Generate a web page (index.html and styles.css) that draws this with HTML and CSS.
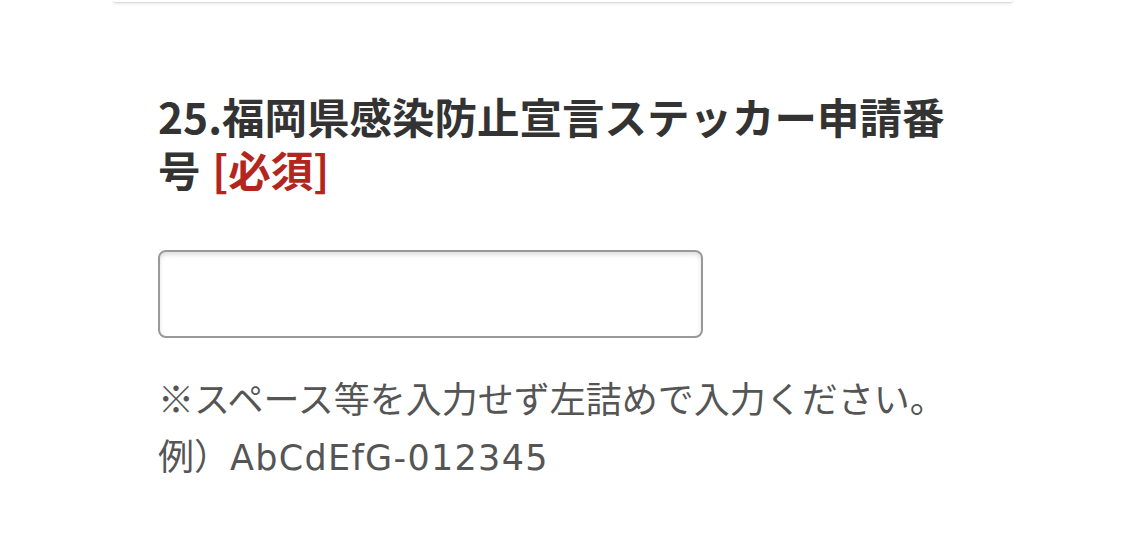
FILE: index.html
```html
<!DOCTYPE html>
<html lang="ja">
<head>
<meta charset="UTF-8" />
<meta name="viewport" content="width=device-width, initial-scale=1.0"/>
<title>申請フォーム</title>
<link rel="stylesheet" href="styles.css">
</head>
<body>
  <div class="prev-card"></div>

  <section class="field">
    <h3 class="field-title">25.福岡県感染防止宣言ステッカー申請番号 <span class="req">[必須]</span></h3>
    <input class="field-input" id="stickerNo" type="text" />
    <p class="note">※スペース等を入力せず左詰めで入力ください。</p>
    <p class="note">例）<span class="sample">AbCdEfG-012345</span></p>
  </section>
</body>
</html>
```

FILE: styles.css
```css
:root {
  --text: #333;
  --muted: #555;
  --required: #b3261e;
  --border: #999;
  --font: "Noto Sans CJK JP", "Noto Sans", sans-serif;
  --latin: "DejaVu Sans", "Noto Sans", sans-serif;
}

body {
  margin: 0;
  background: #fff;
  font-family: var(--font);
  color: var(--text);
}

.prev-card {
  height: 2px;
  margin: 0 110px 0 113px;
  border-bottom: 1px solid #dcdcdc;
  border-radius: 0 0 4px 4px;
  box-shadow: 0 1px 3px rgba(0, 0, 0, 0.1);
}

.field {
  margin: 0 110px 0 115px;
  padding: 86px 43px 0;
}

.field-title {
  margin: 0;
  font-size: 42.5px;
  line-height: 53px;
  font-weight: bold;
}

.req {
  color: var(--required);
  margin-left: 2px;
}

.field-input {
  display: block;
  box-sizing: border-box;
  width: 545px;
  height: 88px;
  margin-top: 55px;
  border: 2px solid var(--border);
  border-radius: 8px;
  box-shadow: inset 0 3px 4px rgba(0, 0, 0, 0.12);
  background: #fff;
  font-size: 35px;
  outline: none;
}

.field-input + .note {
  margin-top: 31px;
}

.note {
  margin: 0;
  font-size: 36px;
  line-height: 57px;
  color: var(--muted);
}

.sample {
  font-family: var(--latin);
  font-size: 35px;
  letter-spacing: 1.3px;
}
```
